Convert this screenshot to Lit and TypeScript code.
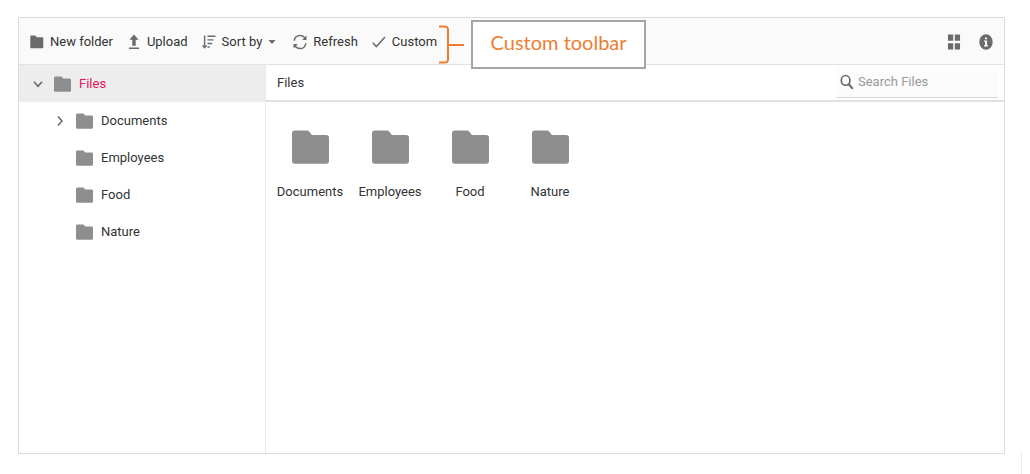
import { LitElement, html, css, svg } from "lit";
import { customElement, property, state } from "lit/decorators.js";
import { classMap } from "lit/directives/class-map.js";

const shapes: Record<string, { box: string; art: unknown }> = {
  newFolder: {
    box: "0 0 14 14",
    art: svg`<path fill="currentColor" d="M1.2 .6h4l1.6 1.7h5.6q.9 0 .9 1v9q0 .9-.9.9H1.2q-.9 0-.9-.9V1.5q0-.9.9-.9z"/>`,
  },
  upload: {
    box: "0 0 14 16",
    art: svg`<path fill="currentColor" d="M7 .6l4.6 5.2H8.7v6H5.3v-6H2.4zM2 13.4h10v1.5H2z"/>`,
  },
  sort: {
    box: "0 0 14 14",
    art: svg`<path fill="none" stroke="currentColor" stroke-width="1.4" d="M2.6 .5v11.6M.6 10.4l2 2.2 2-2.2M5.5 1.3h8M5.5 4.9h6M5.5 8.5h4.6M5.5 12h2.2"/>`,
  },
  caret: { box: "0 0 8 4", art: svg`<path fill="currentColor" d="M.4 0h7.2L4 4z"/>` },
  refresh: {
    box: "0 0 14 16",
    art: svg`<path fill="none" stroke="currentColor" stroke-width="1.5" d="M1.2 6.800C1.500 3.500 4 1.400 7 1.400c2.200 0 3.900 1 5 2.700M12.800 9.200c-.3 3.300-2.800 5.400-5.800 5.400-2.200 0-3.900-1-5-2.700"/><path fill="currentColor" d="M13.500 1.500v4.600H9.200zM.5 14.500V9.900h4.300z"/>`,
  },
  check: {
    box: "0 0 14 14",
    art: svg`<path fill="none" stroke="currentColor" stroke-width="1.500" d="M.8 7.800l3.600 3.800L13 2"/>`,
  },
  grid: {
    box: "0 0 12 14",
    art: svg`<path fill="currentColor" d="M.7 .5h4.600v5.500H.7zM6.700 .5h4.600v5.500H6.700zM.7 8h4.600v5.500H.7zM6.700 8h4.600v5.500H6.700z"/>`,
  },
  info: {
    box: "0 0 14 16",
    art: svg`<ellipse cx="7" cy="8" rx="6.700" ry="7.700" fill="currentColor"/><path fill="#fafafa" d="M6 3.400h2v1.900H6zM5 6.500h3v4.700h1v1.300H5v-1.300h1V7.700H5z"/>`,
  },
  search: {
    box: "0 0 14 16",
    art: svg`<ellipse cx="5.600" cy="6.400" rx="4.300" ry="4.900" fill="none" stroke="currentColor" stroke-width="1.600"/><path stroke="currentColor" stroke-width="2" d="M8.600 10l4.200 4.800"/>`,
  },
  down: {
    box: "0 0 10 10",
    art: svg`<path fill="none" stroke="currentColor" stroke-width="1.500" d="M1 2.700l4 4.600 4-4.600"/>`,
  },
  right: {
    box: "0 0 10 10",
    art: svg`<path fill="none" stroke="currentColor" stroke-width="1.500" d="M3 .5l4 4.500-4 4.500"/>`,
  },
  folder: {
    box: "0 0 37 34",
    art: svg`<path fill="currentColor" d="M3 .5h12.500q.8 0 1.400.7L20 4.900h14q3 0 3 2.800V31q0 2.800-3 2.800H3q-3 0-3-2.800V3.300Q0 .5 3 .5z"/>`,
  },
};

@customElement("fm-icon")
export class FmIcon extends LitElement {
  @property() name = "folder";

  static styles = css`
    :host {
      display: inline-flex;
      flex: none;
      width: 14px;
      height: 16px;
    }
    svg {
      width: 100%;
      height: 100%;
    }
  `;

  render() {
    const shape = shapes[this.name];
    return html`<svg viewBox=${shape.box} aria-hidden="true">${shape.art}</svg>`;
  }
}

@customElement("app-root")
export class AppRoot extends LitElement {
  @state() private selected = "Files";

  private folders = ["Documents", "Employees", "Food", "Nature"];

  static styles = css`
    :host {
      display: flex;
      position: relative;
      box-sizing: border-box;
      min-height: 100vh;
      padding: 17px 25px 20px 18px;
      background: #fff;
      color: #333;
      font: 13px/20px Roboto, "Liberation Sans", sans-serif;
    }
    :host::after {
      content: "";
      position: absolute;
      right: 8px;
      bottom: 0;
      width: 1px;
      height: 22px;
      background: #ececec;
    }
    * {
      box-sizing: border-box;
    }
    button,
    input {
      border: 0;
      margin: 0;
      padding: 0;
      background: none;
      color: inherit;
      font: inherit;
    }
    button {
      display: flex;
      align-items: center;
      cursor: pointer;
      white-space: nowrap;
    }
    ul {
      list-style: none;
      margin: 0;
      padding: 0;
    }
    .manager {
      flex: 1;
      display: flex;
      flex-direction: column;
      border: 1px solid #dcdcdc;
      min-width: 0;
    }
    .toolbar {
      display: flex;
      align-items: center;
      justify-content: space-between;
      height: 47px;
      padding: 2px 11px 0 11px;
      background: #fafafa;
      border-bottom: 1px solid #e3e3e3;
    }
    .tools {
      display: flex;
      gap: 14px;
    }
    .tool {
      gap: 6px;
    }
    .tool fm-icon,
    .view fm-icon {
      color: #6b6b6b;
    }
    .views {
      display: flex;
      gap: 18px;
    }
    .tool .caret {
      width: 8px;
      height: 4px;
      margin-right: 3px;
    }
    .last {
      position: relative;
    }
    .note {
      position: absolute;
      left: 100%;
      top: -12px;
      padding-left: 2px;
      display: flex;
      align-items: center;
      gap: 7px;
      color: #ed7d31;
    }
    .bracket {
      flex: none;
      width: 25px;
      height: 39px;
    }
    .callout {
      width: 175px;
      height: 49px;
      border: 2px solid #a5a5a5;
      background: #fff;
      font: 20px/40px Lato, Carlito, sans-serif;
      text-align: center;
      white-space: nowrap;
    }
    .body {
      flex: 1;
      display: flex;
    }
    .side {
      flex: none;
      width: 247px;
      border-right: 1px solid #e9e9e9;
    }
    .node {
      width: 100%;
      height: 37px;
      padding-left: 14px;
      gap: 8px;
      text-align: left;
    }
    .branch .node {
      padding-left: 36px;
    }
    .node.selected {
      background: #ededed;
      color: #e3165b;
    }
    .arrow {
      width: 10px;
      height: 10px;
      margin-right: 3px;
      color: #666;
    }
    .leaf {
      visibility: hidden;
    }
    .small {
      width: 17px;
      height: 16px;
      color: #8e8e8e;
    }
    .main {
      flex: 1;
      min-width: 0;
    }
    .crumbs {
      display: flex;
      align-items: center;
      justify-content: space-between;
      height: 37px;
      padding: 0 6px 0 11px;
      border-bottom: 2px solid #e1e1e1;
    }
    .crumbs a {
      color: inherit;
      text-decoration: none;
    }
    .search {
      display: flex;
      align-items: center;
      gap: 4px;
      width: 162px;
      height: 30px;
      padding-left: 4px;
      background: #fcfcfc;
      border-bottom: 1px solid #d8d8d8;
      color: #666;
    }
    .search input {
      flex: 1;
      min-width: 0;
      outline: 0;
    }
    .search input::placeholder {
      color: #999;
      opacity: 1;
    }
    .tiles {
      display: flex;
      flex-wrap: wrap;
      padding: 28px 4px;
    }
    .tile {
      flex-direction: column;
      width: 80px;
      gap: 18px;
    }
    .large {
      width: 37px;
      height: 34px;
      color: #8e8e8e;
    }
  `;

  private node(name: string, arrow: string) {
    return html`<button
      class=${classMap({ node: true, selected: this.selected === name })}
      @click=${() => (this.selected = name)}
    >
      <fm-icon class=${classMap({ arrow: true, leaf: !arrow })} name=${arrow || "right"}></fm-icon>
      <fm-icon class="small" name="folder"></fm-icon>
      <span>${name}</span>
    </button>`;
  }

  render() {
    return html`
      <section class="manager">
        <header class="toolbar">
          <div class="tools">
            <button class="tool"><fm-icon name="newFolder"></fm-icon>New folder</button>
            <button class="tool"><fm-icon name="upload"></fm-icon>Upload</button>
            <button class="tool">
              <fm-icon name="sort"></fm-icon>Sort by<fm-icon class="caret" name="caret"></fm-icon>
            </button>
            <button class="tool"><fm-icon name="refresh"></fm-icon>Refresh</button>
            <div class="last">
              <button class="tool"><fm-icon name="check"></fm-icon>Custom</button>
              <div class="note">
                <svg class="bracket" viewBox="0 0 25 39" aria-hidden="true">
                  <path
                    fill="none"
                    stroke="currentColor"
                    stroke-width="2"
                    d="M0 1.500h5q4 0 4 3v30q0 3-4 3H0M9 20h16"
                  />
                </svg>
                <div class="callout">Custom toolbar</div>
              </div>
            </div>
          </div>
          <div class="views">
            <button class="view" aria-label="View"><fm-icon name="grid"></fm-icon></button>
            <button class="view" aria-label="Details"><fm-icon name="info"></fm-icon></button>
          </div>
        </header>
        <div class="body">
          <nav class="side">
            <ul>
              <li>
                ${this.node("Files", "down")}
                <ul class="branch">
                  ${this.folders.map((f) => html`<li>${this.node(f, f === "Documents" ? "right" : "")}</li>`)}
                </ul>
              </li>
            </ul>
          </nav>
          <main class="main">
            <div class="crumbs">
              <a href="#files">Files</a>
              <label class="search">
                <fm-icon name="search"></fm-icon>
                <input type="text" placeholder="Search Files" aria-label="Search Files" />
              </label>
            </div>
            <ul class="tiles">
              ${this.folders.map(
                (f) => html`<li>
                  <button class="tile"><fm-icon class="large" name="folder"></fm-icon>${f}</button>
                </li>`
              )}
            </ul>
          </main>
        </div>
      </section>
    `;
  }
}
